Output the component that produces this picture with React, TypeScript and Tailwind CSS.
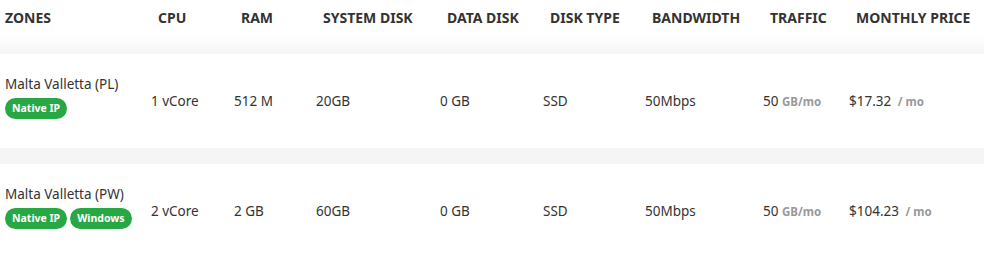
export default function App() {
  const cols = ["w-[146px]", "w-[83px]", "w-[82px]", "w-[124px]", "w-[103px]", "w-[102px]", "w-[118px]", "w-[86px]", "flex-1"];
  const heads = ["ZONES", "CPU", "RAM", "SYSTEM DISK", "DATA DISK", "DISK TYPE", "BANDWIDTH", "TRAFFIC", "MONTHLY PRICE"];
  const rows = [
    { zone: "Malta Valletta (PL)", tags: ["Native IP"], cpu: "1 vCore", ram: "512 M", sys: "20GB", data: "0 GB", type: "SSD", bw: "50Mbps", traffic: "50", price: "$17.32" },
    { zone: "Malta Valletta (PW)", tags: ["Native IP", "Windows"], cpu: "2 vCore", ram: "2 GB", sys: "60GB", data: "0 GB", type: "SSD", bw: "50Mbps", traffic: "50", price: "$104.23" },
  ];

  return (
    <div className="w-[984px] h-[256px] overflow-hidden bg-white text-[#333] font-['Noto_Sans',sans-serif]">
      <div className="flex h-[35px] items-center pl-[5px] text-[14px] font-bold text-[#333]">
        {heads.map((h, i) => (
          <div key={h} className={`${cols[i]} ${i === 0 ? "" : "pl-[7px]"} whitespace-nowrap`}>{h}</div>
        ))}
      </div>
      <div className="h-[19px] bg-gradient-to-b from-white to-[#f5f5f6]" />
      {rows.map((r, idx) => (
        <div key={r.zone}>
          {idx > 0 && <div className="h-[16px] bg-[#f5f5f6]" />}
          <div className="flex h-[94px] items-center pl-[5px] text-[13.5px]">
            <div className={`${cols[0]} flex flex-col gap-[4px] pb-[9px]`}>
              <div className="leading-[20px]">{r.zone}</div>
              <div className="flex gap-[3px]">
                {r.tags.map((t) => (
                  <span key={t} className="h-[21px] px-[7px] rounded-full bg-[#28a745] text-white text-[10.5px] font-bold leading-[21px]">{t}</span>
                ))}
              </div>
            </div>
            <div className={cols[1]}>{r.cpu}</div>
            <div className={cols[2]}>{r.ram}</div>
            <div className={cols[3]}>{r.sys}</div>
            <div className={cols[4]}>{r.data}</div>
            <div className={cols[5]}>{r.type}</div>
            <div className={cols[6]}>{r.bw}</div>
            <div className={cols[7]}>
              {r.traffic} <span className="text-[11.5px] font-bold text-[#999]">GB/mo</span>
            </div>
            <div className={cols[8]}>
              {r.price} <span className="ml-[3px] text-[11.5px] font-bold text-[#999]">/ mo</span>
            </div>
          </div>
        </div>
      ))}
    </div>
  );
}
